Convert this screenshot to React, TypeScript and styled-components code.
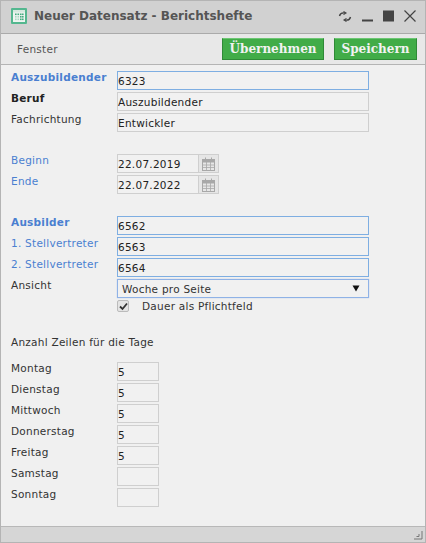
import styled, { createGlobalStyle } from 'styled-components';

const GlobalStyle = createGlobalStyle`
  html, body {
    margin: 0;
    padding: 0;
    background: #f0f0f0;
  }
`;

const Dialog = styled.div`
  width: 426px;
  height: 543px;
  box-sizing: border-box;
  display: flex;
  flex-direction: column;
  border: 1px solid #b4b4b4;
  background: #f0f0f0;
  font-family: 'DejaVu Sans', 'Noto Sans', sans-serif;
  font-size: 10.5px;
  letter-spacing: 0.25px;
  color: #333;
`;

const TitleBar = styled.header`
  height: 33px;
  flex: none;
  box-sizing: border-box;
  display: flex;
  align-items: center;
  padding: 0 9px 2px 10px;
  background: #d1d1d1;
  border-bottom: 1px solid #aaa;
`;

const Title = styled.h1`
  flex: 1;
  margin: 0 0 0 7px;
  font-size: 12px;
  font-weight: 700;
  letter-spacing: 0;
  color: #555;
`;

const WindowIcons = styled.div`
  display: flex;
  align-items: center;
  gap: 10px;
  color: #444;
`;

const ToolBar = styled.div`
  height: 31px;
  flex: none;
  box-sizing: border-box;
  display: flex;
  align-items: center;
  padding: 0 8px 0 16px;
  gap: 10px;
  background: #e8e8e8;
  border-bottom: 1px solid #b4b4b4;
`;

const MenuLabel = styled.span`
  flex: 1;
  color: #555;
`;

const SaveButton = styled.button`
  height: 22px;
  margin: 0;
  padding: 0 6.5px;
  box-sizing: border-box;
  border: 1px solid #2f8a37;
  border-top-color: #6cc673;
  background: #41ac48;
  color: #f2f2f2;
  font-family: 'DejaVu Serif', 'Liberation Serif', serif;
  font-size: 12px;
  font-weight: 700;
`;

const Form = styled.main`
  flex: 1;
  display: flex;
  flex-direction: column;
  padding: 6px 0 0 10px;
`;

const Group = styled.section<{ $gapAfter?: number }>`
  display: flex;
  flex-direction: column;
  gap: 2px;
  margin-bottom: ${(p) => p.$gapAfter ?? 0}px;
`;

const Row = styled.div`
  display: flex;
  height: 19px;
`;

const Label = styled.label<{ $tone?: 'blue' | 'strongBlue' | 'strong' }>`
  width: 106px;
  flex: none;
  margin-top: -2px;
  line-height: 17px;
  white-space: nowrap;
  font-weight: ${(p) => (p.$tone === 'strongBlue' || p.$tone === 'strong' ? 700 : 400)};
  color: ${(p) =>
    p.$tone === 'blue' || p.$tone === 'strongBlue'
      ? '#4a7fd0'
      : p.$tone === 'strong'
        ? '#222'
        : '#333'};
`;

const Field = styled.div<{ $active?: boolean; $width?: number }>`
  width: ${(p) => p.$width ?? 252}px;
  height: 19px;
  box-sizing: border-box;
  display: flex;
  align-items: center;
  padding-top: 1px;
  border: 1px solid ${(p) => (p.$active ? '#7eaee2' : '#cfcfcf')};
  background: #f1f1f1;
  color: #222;
`;

const DateField = styled.div`
  display: flex;
`;

const CalendarTrigger = styled.div`
  width: 20px;
  height: 19px;
  box-sizing: border-box;
  display: flex;
  align-items: center;
  justify-content: center;
  border: 1px solid #cfcfcf;
  border-left: 0;
  background: #e6e6e6;
`;

const SelectField = styled.div`
  width: 252px;
  height: 19px;
  box-sizing: border-box;
  display: flex;
  align-items: center;
  justify-content: space-between;
  padding: 0 8px 0 4px;
  border: 1px solid #8fb2e6;
  box-shadow: 0 0 1px #a9c4ee;
  background: #f1f1f1;
  color: #333;
`;

const CheckRow = styled.div`
  display: flex;
  align-items: center;
  height: 14px;
  margin: 1px 0 0 106px;
  gap: 13px;
  color: #333;
`;

const CheckBox = styled.span`
  width: 12px;
  height: 12px;
  box-sizing: border-box;
  display: flex;
  align-items: center;
  justify-content: center;
  border: 1px solid #bbb;
  border-radius: 2px;
  background: #e4e4e4;
`;

const SectionText = styled.p`
  margin: 21px 0 12px;
  height: 16px;
  line-height: 16px;
  color: #333;
`;

const StatusBar = styled.footer`
  height: 15px;
  flex: none;
  display: flex;
  align-items: center;
  justify-content: flex-end;
  padding-right: 2px;
  background: #d6d6d6;
  border-top: 1px solid #b8b8b8;
`;

const AppIcon = () => (
  <svg width="16" height="16" viewBox="0 0 16 16">
    <rect width="16" height="16" rx="1" fill="#54b78f" />
    <rect x="2" y="2" width="12" height="12" fill="#eef5f1" />
    <rect x="2" y="2" width="12" height="2.5" fill="#d5e9df" />
    {[5.5, 8, 10.5].map((y) =>
      [4, 6.5, 9, 11].map((x) => (
        <rect key={`${x}-${y}`} x={x} y={y} width="1.6" height="1.6" fill={y > 5.5 && x < 9 ? '#a9d8c2' : '#45ab80'} />
      )),
    )}
  </svg>
);

const RestoreIcon = () => (
  <svg width="14" height="11" viewBox="0 0 14 11" fill="none" stroke="#444" strokeWidth="1.4">
    <path d="M1.5 5C2 2.5 4 1.5 7 2" />
    <path d="M12.5 6C12 8.5 10 9.5 7 9" />
    <path d="M5.5 0.5L8 2L5.5 3.6" strokeWidth="1.1" />
    <path d="M8.5 7.4L6 9L8.5 10.5" strokeWidth="1.1" />
  </svg>
);

const MinimizeIcon = () => (
  <svg width="11" height="12" viewBox="0 0 11 12">
    <rect x="0" y="9.5" width="11" height="2" fill="#444" />
  </svg>
);

const MaximizeIcon = () => (
  <svg width="11" height="12" viewBox="0 0 11 12">
    <rect x="0" y="0.5" width="11" height="11" fill="#444" />
  </svg>
);

const CloseIcon = () => (
  <svg width="12" height="12" viewBox="0 0 12 12" stroke="#444" strokeWidth="1.2">
    <path d="M0.5 0.5L11.5 11.5M11.5 0.5L0.5 11.5" />
  </svg>
);

const CalendarIcon = () => (
  <svg width="13" height="14" viewBox="0 0 13 14" fill="none" stroke="#a8a8a8">
    <rect x="0.5" y="2.5" width="12" height="11" />
    <rect x="0.5" y="2.5" width="12" height="2.5" fill="#a8a8a8" />
    <path d="M3.5 0.5V3M9.5 0.5V3" />
    <path d="M0.5 8H12.5M0.5 10.5H12.5M4.5 5V13.5M8.5 5V13.5" strokeWidth="0.8" />
  </svg>
);

const CheckMark = () => (
  <svg width="9" height="9" viewBox="0 0 9 9" fill="none" stroke="#333" strokeWidth="1.8">
    <path d="M1 4.5L3.5 7L8 1.5" />
  </svg>
);

const GripIcon = () => (
  <svg width="10" height="10" viewBox="0 0 10 10" fill="none" stroke="#777" strokeWidth="1">
    <path d="M9 1V9H1M6 4V6.5H3.5" />
  </svg>
);

const dates = [
  { label: 'Beginn', value: '22.07.2019' },
  { label: 'Ende', value: '22.07.2022' },
];

const days = [
  { label: 'Montag', value: '5' },
  { label: 'Dienstag', value: '5' },
  { label: 'Mittwoch', value: '5' },
  { label: 'Donnerstag', value: '5' },
  { label: 'Freitag', value: '5' },
  { label: 'Samstag', value: '' },
  { label: 'Sonntag', value: '' },
];

export default function App() {
  return (
    <>
      <GlobalStyle />
      <Dialog>
        <TitleBar>
          <AppIcon />
          <Title>Neuer Datensatz - Berichtshefte</Title>
          <WindowIcons>
            <RestoreIcon />
            <MinimizeIcon />
            <MaximizeIcon />
            <CloseIcon />
          </WindowIcons>
        </TitleBar>
        <ToolBar>
          <MenuLabel>Fenster</MenuLabel>
          <SaveButton>Übernehmen</SaveButton>
          <SaveButton>Speichern</SaveButton>
        </ToolBar>
        <Form>
          <Group $gapAfter={22}>
            <Row>
              <Label $tone="strongBlue">Auszubildender</Label>
              <Field $active>6323</Field>
            </Row>
            <Row>
              <Label $tone="strong">Beruf</Label>
              <Field>Auszubildender</Field>
            </Row>
            <Row>
              <Label>Fachrichtung</Label>
              <Field>Entwickler</Field>
            </Row>
          </Group>
          <Group $gapAfter={22}>
            {dates.map((d) => (
              <Row key={d.label}>
                <Label $tone="blue">{d.label}</Label>
                <DateField>
                  <Field $width={82}>{d.value}</Field>
                  <CalendarTrigger>
                    <CalendarIcon />
                  </CalendarTrigger>
                </DateField>
              </Row>
            ))}
          </Group>
          <Group>
            <Row>
              <Label $tone="strongBlue">Ausbilder</Label>
              <Field $active>6562</Field>
            </Row>
            <Row>
              <Label $tone="blue">1. Stellvertreter</Label>
              <Field $active>6563</Field>
            </Row>
            <Row>
              <Label $tone="blue">2. Stellvertreter</Label>
              <Field $active>6564</Field>
            </Row>
            <Row>
              <Label>Ansicht</Label>
              <SelectField>
                Woche pro Seite
                <svg width="8" height="7" viewBox="0 0 8 7">
                  <path d="M0.5 0.5H7.5L4 6.5Z" fill="#111" />
                </svg>
              </SelectField>
            </Row>
          </Group>
          <CheckRow>
            <CheckBox>
              <CheckMark />
            </CheckBox>
            Dauer als Pflichtfeld
          </CheckRow>
          <SectionText>Anzahl Zeilen für die Tage</SectionText>
          <Group>
            {days.map((d) => (
              <Row key={d.label}>
                <Label>{d.label}</Label>
                <Field $width={42}>{d.value}</Field>
              </Row>
            ))}
          </Group>
        </Form>
        <StatusBar>
          <GripIcon />
        </StatusBar>
      </Dialog>
    </>
  );
}
